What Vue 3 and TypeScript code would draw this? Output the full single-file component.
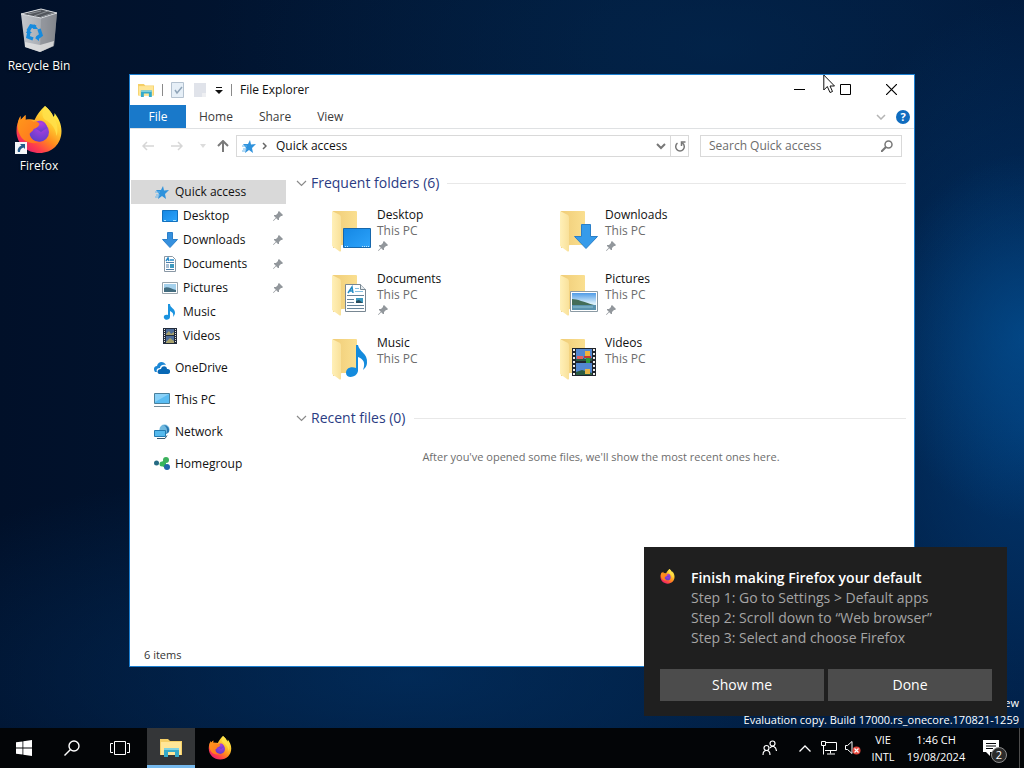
<script setup lang="ts">
import { ref } from 'vue'

interface NavItem {
  label: string
  icon: string
  child?: boolean
  pinned?: boolean
  gap?: boolean
}

interface Folder {
  name: string
  place: string
  icon: string
  pinned: boolean
}

const selected = ref('Quick access')
const query = ref('')

const navItems: NavItem[] = [
  { label: 'Quick access', icon: 'i-star' },
  { label: 'Desktop', icon: 'i-desktop', child: true, pinned: true },
  { label: 'Downloads', icon: 'i-download', child: true, pinned: true },
  { label: 'Documents', icon: 'i-document', child: true, pinned: true },
  { label: 'Pictures', icon: 'i-picture', child: true, pinned: true },
  { label: 'Music', icon: 'i-music', child: true },
  { label: 'Videos', icon: 'i-video', child: true },
  { label: 'OneDrive', icon: 'i-onedrive', gap: true },
  { label: 'This PC', icon: 'i-pc', gap: true },
  { label: 'Network', icon: 'i-network', gap: true },
  { label: 'Homegroup', icon: 'i-homegroup', gap: true },
]

const folders: Folder[] = [
  { name: 'Desktop', place: 'This PC', icon: 'f-desktop', pinned: true },
  { name: 'Downloads', place: 'This PC', icon: 'f-download', pinned: true },
  { name: 'Documents', place: 'This PC', icon: 'f-document', pinned: true },
  { name: 'Pictures', place: 'This PC', icon: 'f-picture', pinned: true },
  { name: 'Music', place: 'This PC', icon: 'f-music', pinned: false },
  { name: 'Videos', place: 'This PC', icon: 'f-video', pinned: false },
]

const tabs = ['Home', 'Share', 'View']
const steps = [
  'Step 1: Go to Settings > Default apps',
  'Step 2: Scroll down to “Web browser”',
  'Step 3: Select and choose Firefox',
]
</script>

<template>
  <div class="screen">
    <svg class="sprite" aria-hidden="true">
      <defs>
        <linearGradient id="g-folder" x1="0" x2="1" y1="0" y2="0">
          <stop offset="0" stop-color="#f0cd78" />
          <stop offset="1" stop-color="#fadf90" />
        </linearGradient>
        <linearGradient id="g-flap" x1="0" x2="1" y1="0" y2="0">
          <stop offset="0" stop-color="#fff0b8" />
          <stop offset="1" stop-color="#f9e19a" />
        </linearGradient>
        <linearGradient id="g-blue" x1="0" x2="1" y1="0" y2="1">
          <stop offset="0" stop-color="#1487e4" />
          <stop offset="1" stop-color="#2ea4fb" />
        </linearGradient>
        <linearGradient id="g-sky" x1="0" x2="0" y1="0" y2="1">
          <stop offset="0" stop-color="#4f9be6" />
          <stop offset="0.6" stop-color="#d9effb" />
        </linearGradient>
        <linearGradient id="g-fox" x1="0.85" x2="0.2" y1="0.1" y2="0.95">
          <stop offset="0" stop-color="#fff44f" />
          <stop offset="0.3" stop-color="#ffc52e" />
          <stop offset="0.55" stop-color="#ff8a1e" />
          <stop offset="0.8" stop-color="#ff3f4a" />
          <stop offset="1" stop-color="#e5206e" />
        </linearGradient>
        <linearGradient id="g-head" x1="0" x2="1" y1="0" y2="1">
          <stop offset="0" stop-color="#ff9a1a" />
          <stop offset="1" stop-color="#ff7020" />
        </linearGradient>
        <radialGradient id="g-globe" cx="0.6" cy="0.25" r="0.8">
          <stop offset="0" stop-color="#b33ee0" />
          <stop offset="1" stop-color="#5a3fc9" />
        </radialGradient>
        <linearGradient id="g-bin" x1="0" x2="1" y1="0" y2="0">
          <stop offset="0" stop-color="#c3c7cd" />
          <stop offset="0.65" stop-color="#a4a8ae" />
          <stop offset="1" stop-color="#7c8086" />
        </linearGradient>
      </defs>

      <symbol id="firefox" viewBox="0 0 48 48">
        <path fill="url(#g-fox)" d="M30 0c4 3 7 7 8.500 11 1-1 1-3 1-4 4 5 7 11 7 18C46.500 38 37 47 24.500 47S1.500 38 1.500 25c0-6 1.500-10 4-15v4l5-5v5c3-1 6-1 9 0 3-6 6-10 10.500-14z" />
        <circle cx="24" cy="26" r="10" fill="url(#g-globe)" />
        <path fill="url(#g-globe)" d="M17 20c0-3 6-6 10-5 3 1 5 4 5 7l-6 4z" />
        <path fill="url(#g-head)" d="M5.500 10v4l5-5v5c3-1 6 0 8 2 2-1 5 0 6 2-1 3-3 4-6 5 0 2-3 3-4 5 1 5 5 8 11 8-8 3-18 0-21-8-3-6-2-13 1-18z" />
        <path fill="#ffe14a" d="M30 0c4 3 7 7 8.500 11 4 6 5 13 3 19-1-8-5-13-11-16-4-3-4-8-.5-14z" opacity=".85" />
      </symbol>

      <symbol id="recycle" viewBox="0 0 40 46">
        <path d="M2 6 22 1l16 4-3 33-14 6-15-5z" fill="url(#g-bin)" />
        <path d="M22 10 38 5l-3 33-14 6z" fill="#85898f" opacity=".6" />
        <path d="M2 6 22 1l16 4-16 5z" fill="#52565c" stroke="#d9dce0" />
        <path d="m9 6 13-3M15 8l14-5M22 9l12-4" stroke="#8b9096" fill="none" />
        <path d="m6 34 15 3 14-4-1 5-13 6-15-5z" fill="#e4e4e4" opacity=".8" />
        <path d="m9 23 3-5 5 1M20 21l2 6-4 3M14 31l-5-2 1-5" fill="none" stroke="#168bde" stroke-width="3.500" />
        <path d="m15 16 4 5h-5zM20 27v6l-4-3zM7 25h6l-4-4z" fill="#168bde" />
      </symbol>

      <symbol id="explorer" viewBox="0 0 22 20">
        <path d="M0 1h8l2 2h12v14H0z" fill="#f5cf66" />
        <path d="M1 4h20v13H1z" fill="#ffe697" />
        <path d="M4 10h15v9h-4v-5H8v5H4z" fill="#35aaca" />
        <path d="M4 10h15v2H4z" fill="#80d2df" />
      </symbol>

      <symbol id="pin" viewBox="0 0 10 10">
        <path d="m6 0 4 4-1 1-1 0-2 2 0 2-1 0-1.800-1.800L.5 10 0 9.500l2.800-2.700L1 5V4h2l2-2V1z" fill="#92979c" />
      </symbol>

      <symbol id="i-star" viewBox="0 0 16 16">
        <path d="M9 2l1 4.500 5-.5-4 4 1 5-4-3-4 3 1-5-3-4h5z" fill="#2f92dc" />
        <path d="M1 8h5M2 11h4M1 13h3" stroke="#69b7ee" />
      </symbol>
      <symbol id="i-desktop" viewBox="0 0 16 16">
        <path d="M.5 2.500h15v11H.5z" fill="url(#g-blue)" stroke="#1271be" />
        <path d="M2 12.500h2M11 12.500h3" stroke="#a6e2ff" />
      </symbol>
      <symbol id="i-download" viewBox="0 0 16 16">
        <path d="M5.500.5h5v7h5L8 15.500.5 7.500h5z" fill="#3590de" stroke="#2b7fca" />
      </symbol>
      <symbol id="i-document" viewBox="0 0 16 16">
        <path d="M2.500.5h8l3 3v12h-11z" fill="#fff" stroke="#8a98a5" />
        <path d="M4 6.500h8M4 9h3M4 11h3M4 13.500h8" stroke="#4e7fa9" />
        <path d="M8 8h4v4H8z" fill="#3d9ac0" />
        <path d="M4 5l2-3 1 3M8 4h4" fill="none" stroke="#2489c9" stroke-width="1.500" />
      </symbol>
      <symbol id="i-picture" viewBox="0 0 16 16">
        <path d="M.5 2.500h15v11H.5z" fill="#fff" stroke="#99a5ad" />
        <path d="M2 4h12v8H2z" fill="#a5d1ec" />
        <path d="M2 8c4-2 7 1 12 2v2H2z" fill="#426c7f" />
      </symbol>
      <symbol id="i-music" viewBox="0 0 16 16">
        <path d="M6 0h2c0 4 5 4 5 9 0 1-1 3-2 4 1-4-1-5-3-6v6c0 3-5 4-6 1s2-4 4-3z" fill="#1b93df" />
      </symbol>
      <symbol id="i-video" viewBox="0 0 16 16">
        <path d="M1 0h14v16H1z" fill="#222b3b" />
        <path d="M2.500 1v14M13.500 1v14" stroke="#e5e5e5" stroke-dasharray="1 1" />
        <path d="M4 1h8v6H4zM4 8h8v7H4z" fill="#4e6d9a" />
        <path d="m4 6 3-3 2 3 3-2v3H4zM4 14l4-4 4 3v2H4z" fill="#a7a16c" />
      </symbol>
      <symbol id="i-onedrive" viewBox="0 0 16 16">
        <path d="M1 12C-1 9 0 6 3 6c1-5 7-5 9-1-4-1-6 1-6 3-3 0-4 2-3 4z" fill="#1c87d5" />
        <path d="M5 14c-3-2-1-5 2-5 1-4 6-3 6 0 4-1 4 5 1 5z" fill="#0868b5" />
      </symbol>
      <symbol id="i-pc" viewBox="0 0 16 16">
        <path d="M.5 1.500h15v10H.5z" fill="#5abcf2" stroke="#4a809c" />
        <path d="M1 2h14L1 10z" fill="#a8e0fb" opacity=".6" />
        <path d="M0 14.500h16" stroke="#788d99" />
      </symbol>
      <symbol id="i-network" viewBox="0 0 16 16">
        <circle cx="10.500" cy="5.500" r="5" fill="#70b9df" />
        <path d="M9 1c4 1 5 6 3 9l3-2c1-4-2-7-6-7z" fill="#2975ad" />
        <path d="M.5 6.500h11v6H.5z" fill="#55b9ed" stroke="#247bb0" />
        <path d="M3 14.500h8l2-3" fill="none" stroke="#38566d" />
      </symbol>
      <symbol id="i-homegroup" viewBox="0 0 16 16">
        <path d="M6 8l6-6v11z" fill="#37b65c" />
        <circle cx="2.500" cy="7" r="2.500" fill="#256a83" />
        <circle cx="8" cy="8" r="2.500" fill="#37b65c" />
        <circle cx="12" cy="4" r="3" fill="#3cb15d" />
        <circle cx="13" cy="11" r="3" fill="#2267a9" />
      </symbol>

      <symbol id="folder" viewBox="0 0 40 42">
        <path d="M1 1h23q1 0 1 1v33H10L1 38z" fill="url(#g-folder)" />
        <path d="M0 1l8 4q1 1 1 3v33q-1 1-2 0L0 36z" fill="url(#g-flap)" />
      </symbol>
      <symbol id="f-desktop" viewBox="0 0 40 42">
        <path d="M11.500 18.500h27v19h-27z" fill="url(#g-blue)" stroke="#1767ab" />
        <path d="M13 36.500h3M30 36.500h7" stroke="#bfe8ff" stroke-dasharray="1 1" />
      </symbol>
      <symbol id="f-download" viewBox="0 0 40 42">
        <path d="M21.500 14.500h9v12h7L26 38.500 14.500 26.500h7z" fill="#369bea" stroke="#2a7fc8" />
      </symbol>
      <symbol id="f-document" viewBox="0 0 40 42">
        <path d="M13.500 10.500h15l5 5v22h-20z" fill="#fff" stroke="#788792" />
        <path d="M28.500 10.500v5h5" fill="#e4eaee" stroke="#788792" />
        <path d="m16 19 4-6 1 6m-3-2h3" fill="none" stroke="#238bc4" stroke-width="1.500" />
        <path d="M23 14.500h4M23 17.500h8" stroke="#84bfdf" />
        <path d="M15 21.500h17M15 25.500h7M15 28.500h7M15 31.500h17M15 34.500h17" stroke="#65839a" />
        <path d="M24 24h7v5h-7z" fill="#3d9ac0" />
        <path d="M24 27l3-1 4 3h-7z" fill="#294c5d" />
      </symbol>
      <symbol id="f-picture" viewBox="0 0 40 42">
        <path d="M10.500 17.500h27v20h-27z" fill="#fff" stroke="#8b9aa4" />
        <path d="M12 19h24v17H12z" fill="url(#g-sky)" />
        <path d="M12 25c5 0 12 3 22 6H12z" fill="#436d58" />
        <path d="M12 31h24v5H12z" fill="#5a93ae" />
        <path d="M13 33h20" stroke="#8cc1d2" />
      </symbol>
      <symbol id="f-music" viewBox="0 0 40 42">
        <path d="M24 7h2c1 7 10 8 9 18 0 3-2 5-4 7 3-8 0-11-5-13v14c-1 7-12 8-12 2 0-5 5-7 10-5z" fill="#148bdd" />
      </symbol>
      <symbol id="f-video" viewBox="0 0 40 42">
        <path d="M12 10h24v28H12z" fill="#20242b" />
        <path d="M14 11v26M34 11v26" stroke="#eee" stroke-width="2" stroke-dasharray="2 2" />
        <path d="M16 11h16v12H16zM16 25h16v12H16z" fill="#5387d0" />
        <path d="m16 21 5-2 4 2 7-1v3H16zM16 34l6-2 10 3v2H16z" fill="#2b5c42" />
        <path d="M17 18h6v3h-6z" fill="#e15d60" />
        <path d="M25 13h5v5h-5z" fill="#f0b43c" />
        <path d="M24 18h7v2h-7z" fill="#c63832" />
        <path d="M26 20h4v5h-4z" fill="#2f9a3c" />
        <path d="M25 31h5v5h-5z" fill="#e6b546" />
      </symbol>
    </svg>

    <section class="shortcuts" aria-label="Desktop shortcuts">
      <button type="button" class="shortcut">
        <svg class="bin-art"><use href="#recycle" /></svg>
        <span>Recycle Bin</span>
      </button>
      <button type="button" class="shortcut">
        <span class="fox-wrap">
          <svg class="fox-art"><use href="#firefox" /></svg>
          <svg class="arrow-badge" viewBox="0 0 12 12">
            <path d="M0 0h12v12H0z" fill="#f4f6f8" />
            <path d="M5 2h5v5L8.500 5.500C6 6 5 8 5 10H3C2 7 4 4.500 6.500 3.500z" fill="#245b8c" />
          </svg>
        </span>
        <span>Firefox</span>
      </button>
    </section>

    <main class="window" aria-label="File Explorer">
      <header class="titlebar">
        <svg class="app-icon"><use href="#explorer" /></svg>
        <i class="divider"></i>
        <button type="button" class="quick" aria-label="Properties">
          <svg width="14" height="16" viewBox="0 0 14 16">
            <path d="M.5.500h12v15H.5z" fill="#e6eff7" stroke="#b4c2d0" />
            <path d="m4 8 2 3 5-6" fill="none" stroke="#8fa4b8" stroke-width="1.500" />
          </svg>
        </button>
        <button type="button" class="quick" aria-label="New folder">
          <svg width="14" height="16" viewBox="0 0 14 16">
            <path d="M1 1h12v14H1z" fill="#e0e3ea" />
            <path d="M9 15v-4h4v4z" fill="#eeeff2" />
          </svg>
        </button>
        <button type="button" class="quick caret" aria-label="Customize Quick Access Toolbar">
          <svg width="8" height="8" viewBox="0 0 8 8">
            <path d="M1 1.500h6" stroke="#111" /><path d="M0 4h8L4 8z" fill="#111" />
          </svg>
        </button>
        <i class="divider"></i>
        <h1>File Explorer</h1>
        <div class="controls">
          <button type="button" aria-label="Minimize">
            <svg width="11" height="11" viewBox="0 0 11 11"><path d="M0 5.500h11" stroke="#000" /></svg>
          </button>
          <button type="button" aria-label="Maximize">
            <svg width="11" height="11" viewBox="0 0 11 11"><path d="M.5.500h10v10H.5z" fill="none" stroke="#000" /></svg>
          </button>
          <button type="button" aria-label="Close">
            <svg width="11" height="11" viewBox="0 0 11 11"><path d="m0 0 11 11M11 0 0 11" stroke="#000" stroke-width="1.200" /></svg>
          </button>
        </div>
      </header>

      <nav class="ribbon" aria-label="Ribbon">
        <button type="button" class="file-tab">File</button>
        <button v-for="tab in tabs" :key="tab" type="button" class="tab">{{ tab }}</button>
        <span class="spacer"></span>
        <button type="button" class="expand" aria-label="Expand the Ribbon">
          <svg width="10" height="6" viewBox="0 0 10 6"><path d="m1 1 4 4 4-4" fill="none" stroke="#b4b4b4" stroke-width="1.500" /></svg>
        </button>
        <button type="button" class="help" aria-label="Help">?</button>
      </nav>

      <div class="address-row">
        <button type="button" class="arrow" aria-label="Back">
          <svg width="12" height="10" viewBox="0 0 12 10"><path d="M12 5H1M5 1 1 5l4 4" fill="none" stroke="#d6d6d6" stroke-width="1.500" /></svg>
        </button>
        <button type="button" class="arrow" aria-label="Forward">
          <svg width="12" height="10" viewBox="0 0 12 10"><path d="M0 5h11M7 1l4 4-4 4" fill="none" stroke="#d6d6d6" stroke-width="1.500" /></svg>
        </button>
        <button type="button" class="recent" aria-label="Recent locations">
          <svg width="6" height="4" viewBox="0 0 6 4"><path d="M0 0h6L3 4z" fill="#dcdcdc" /></svg>
        </button>
        <button type="button" class="up" aria-label="Up">
          <svg width="12" height="12" viewBox="0 0 12 12"><path d="M6 12V1M1 6l5-5 5 5" fill="none" stroke="#7a7a7a" stroke-width="2" /></svg>
        </button>
        <div class="address">
          <svg class="small-icon"><use href="#i-star" /></svg>
          <svg class="crumb" width="5" height="8" viewBox="0 0 5 8"><path d="m1 1 3 3-3 3" fill="none" stroke="#666" stroke-width="1.500" /></svg>
          <a href="#" class="path">Quick access</a>
          <button type="button" class="drop" aria-label="Previous locations">
            <svg width="10" height="7" viewBox="0 0 10 7"><path d="m1 1 4 4 4-4" fill="none" stroke="#777" stroke-width="2" /></svg>
          </button>
          <button type="button" class="refresh" aria-label="Refresh">
            <svg width="12" height="12" viewBox="0 0 12 12">
              <path d="M3.500 3.200a4.300 4.300 0 1 0 5 0M7.500 6V2H11.500" fill="none" stroke="#777" stroke-width="1.500" />
            </svg>
          </button>
        </div>
        <label class="search">
          <input v-model="query" type="text" placeholder="Search Quick access" aria-label="Search Quick access" />
          <svg width="12" height="12" viewBox="0 0 12 12"><circle cx="7.500" cy="4.500" r="3.500" fill="none" stroke="#777" stroke-width="1.500" /><path d="m5 7-5 5" stroke="#777" stroke-width="2" /></svg>
        </label>
      </div>

      <div class="body">
        <nav class="tree" aria-label="Navigation pane">
          <button
            v-for="item in navItems"
            :key="item.label"
            type="button"
            class="node"
            :class="{ child: item.child, gap: item.gap, selected: selected === item.label }"
            @click="selected = item.label"
          >
            <svg class="small-icon"><use :href="'#' + item.icon" /></svg>
            <span>{{ item.label }}</span>
            <svg v-if="item.pinned" class="pin"><use href="#pin" /></svg>
          </button>
        </nav>

        <section class="content">
          <h2 class="group">
            <svg width="11" height="7" viewBox="0 0 11 7"><path d="m1 1 4.500 4.500L10 1" fill="none" stroke="#8a8a8a" stroke-width="1.200" /></svg>
            <span>Frequent folders (6)</span><i></i>
          </h2>
          <ul class="tiles">
            <li v-for="folder in folders" :key="folder.name">
              <button type="button" class="tile">
                <svg class="folder-art" viewBox="0 0 40 42">
                  <use href="#folder" /><use :href="'#' + folder.icon" />
                </svg>
                <span class="tile-text">
                  <span>{{ folder.name }}</span>
                  <span class="place">{{ folder.place }}</span>
                  <svg v-if="folder.pinned" class="pin"><use href="#pin" /></svg>
                </span>
              </button>
            </li>
          </ul>
          <h2 class="group">
            <svg width="11" height="7" viewBox="0 0 11 7"><path d="m1 1 4.500 4.500L10 1" fill="none" stroke="#8a8a8a" stroke-width="1.200" /></svg>
            <span>Recent files (0)</span><i></i>
          </h2>
          <p class="empty">After you've opened some files, we'll show the most recent ones here.</p>
        </section>
      </div>

      <footer class="status">6 items</footer>
    </main>

    <div class="watermark"><span>ew</span><span>Evaluation copy. Build 17000.rs_onecore.170821-1259</span></div>

    <aside class="toast" role="alert">
      <div class="toast-main">
        <svg class="toast-icon"><use href="#firefox" /></svg>
        <div>
          <h2>Finish making Firefox your default</h2>
          <p v-for="step in steps" :key="step">{{ step }}</p>
        </div>
      </div>
      <div class="toast-actions">
        <button type="button">Show me</button>
        <button type="button">Done</button>
      </div>
    </aside>

    <svg class="pointer" viewBox="0 0 12 20" aria-hidden="true">
      <path d="M.8 1v15l3.500-3.500L7 18.500l2.500-1L7 12h4.500z" fill="#fff" stroke="#111" />
    </svg>

    <footer class="taskbar">
      <button type="button" class="task" aria-label="Start">
        <svg width="16" height="16" viewBox="0 0 16 16"><path d="M0 2.300 6.500 1.400v6.200H0zM7.300 1.300 16 0v7.600H7.300zM0 8.400h6.500v6.200L0 13.700zM7.300 8.400H16V16l-8.700-1.300z" fill="#fff" /></svg>
      </button>
      <button type="button" class="task" aria-label="Search">
        <svg width="16" height="16" viewBox="0 0 16 16"><circle cx="10" cy="6" r="5" fill="none" stroke="#fff" stroke-width="1.400" /><path d="M6.500 9.500.5 15.500" stroke="#fff" stroke-width="1.400" /></svg>
      </button>
      <button type="button" class="task" aria-label="Task View">
        <svg width="20" height="14" viewBox="0 0 20 14"><path d="M4.500.5h11v13h-11zM3 2.500H.5v9H3M17 2.500h2.500v9H17" fill="none" stroke="#fff" /></svg>
      </button>
      <button type="button" class="task active" aria-label="File Explorer">
        <svg width="22" height="20"><use href="#explorer" /></svg>
      </button>
      <button type="button" class="task" aria-label="Firefox">
        <svg width="24" height="24"><use href="#firefox" /></svg>
      </button>
      <span class="spacer"></span>
      <button type="button" class="people" aria-label="People">
        <svg width="15" height="16" viewBox="0 0 15 16" fill="none" stroke="#fff" stroke-width="1.200">
          <circle cx="10.500" cy="3.500" r="2.500" /><path d="M8 8c2-3 6-2 6.500 3" />
          <circle cx="4.500" cy="8" r="2.500" /><path d="M1 15c0-6 7-6 7 0" />
        </svg>
      </button>
      <button type="button" class="tray" aria-label="Show hidden icons">
        <svg width="12" height="7" viewBox="0 0 12 7"><path d="m.5 6.500 5.500-5.500 5.500 5.500" fill="none" stroke="#fff" stroke-width="1.300" /></svg>
      </button>
      <button type="button" class="tray" aria-label="Network">
        <svg width="16" height="14" viewBox="0 0 16 14" fill="none" stroke="#fff"><path d="M4.500 1.500h11v8H4M9.500 9.500v3M6 13h8M.5.500h4v4h-4zM2.500 4.500v9" /></svg>
      </button>
      <button type="button" class="tray" aria-label="Volume">
        <svg width="16" height="14" viewBox="0 0 16 14">
          <path d="M.5 4.500h2L7 .5v12L2.500 8.500h-2z" fill="none" stroke="#fff" />
          <circle cx="11.500" cy="9.500" r="4" fill="#e5473c" /><path d="m9.500 7.500 4 4m0-4-4 4" stroke="#fff" stroke-width="1.200" />
        </svg>
      </button>
      <button type="button" class="lang"><span>VIE</span><span>INTL</span></button>
      <button type="button" class="clock"><span>1:46 CH</span><span>19/08/2024</span></button>
      <button type="button" class="notify" aria-label="2 new notifications">
        <svg width="16" height="16" viewBox="0 0 16 16"><path d="M0 0h16v12h-9l0 4-4-4H0z" fill="#fff" /><path d="M3 3.500h10M3 6h10M3 8.500h7" stroke="#05070a" /></svg>
        <b>2</b>
      </button>
      <button type="button" class="peek" aria-label="Show desktop"></button>
    </footer>
  </div>
</template>

<style>
html,
body {
  background: #011531;
}
</style>

<style scoped>
* {
  box-sizing: border-box;
}
.screen {
  position: relative;
  height: 100vh;
  overflow: hidden;
  font-family: "Open Sans", "Noto Sans", sans-serif;
  font-size: 12px;
  line-height: 16px;
  color: #111;
  background:
    radial-gradient(ellipse 14% 24% at 100% 44%, rgba(4, 88, 160, 0.55), transparent),
    radial-gradient(ellipse 24% 55% at 100% 55%, rgba(2, 66, 130, 0.7), transparent),
    radial-gradient(ellipse 50% 30% at 70% 6%, rgba(3, 42, 84, 0.55), transparent),
    radial-gradient(ellipse 60% 28% at 40% 88%, rgba(2, 48, 98, 0.75), transparent),
    linear-gradient(90deg, #011029, #011a3a 60%, #01183a);
}
.sprite {
  position: absolute;
  width: 0;
  height: 0;
}
button {
  margin: 0;
  padding: 0;
  border: 0;
  background: none;
  font: inherit;
  color: inherit;
}
h1,
h2,
p,
ul {
  margin: 0;
  padding: 0;
  font: inherit;
  list-style: none;
}
svg {
  flex: none;
  display: block;
}
.spacer {
  flex: 1;
}

.shortcuts {
  display: flex;
  flex-direction: column;
  gap: 32px;
  width: 78px;
  padding-top: 8px;
}
.shortcut {
  display: flex;
  flex-direction: column;
  align-items: center;
  gap: 4px;
  color: #fff;
  text-shadow: 0 1px 2px #000;
}
.bin-art {
  width: 40px;
  height: 46px;
}
.fox-wrap {
  position: relative;
}
.fox-art {
  width: 48px;
  height: 48px;
}
.arrow-badge {
  position: absolute;
  left: 0;
  bottom: 0;
  width: 12px;
  height: 12px;
}

.window {
  position: absolute;
  top: 74px;
  left: 129px;
  right: 109px;
  bottom: 101px;
  display: flex;
  flex-direction: column;
  background: #fff;
  border: 1px solid #1c7fd0;
}
.titlebar {
  display: flex;
  align-items: center;
  height: 30px;
  padding-left: 8px;
  gap: 8px;
}
.titlebar h1 {
  font-size: 12px;
}
.app-icon {
  width: 16px;
  height: 15px;
}
.divider {
  width: 1px;
  height: 12px;
  background: #8a8a8a;
}
.quick {
  width: 14px;
  display: flex;
  justify-content: center;
}
.quick.caret {
  width: 8px;
}
.controls {
  display: flex;
  align-self: stretch;
  margin-left: auto;
}
.controls button {
  width: 46px;
  height: 28px;
  display: flex;
  align-items: center;
  justify-content: center;
}
.ribbon {
  display: flex;
  align-items: center;
  height: 24px;
  padding-right: 4px;
  border-bottom: 1px solid #dfe1e3;
  color: #3b3b3b;
}
.file-tab {
  align-self: stretch;
  width: 56px;
  color: #fff;
  background: #1979ca;
}
.tab {
  padding: 0 13px;
}
.expand {
  padding: 0 10px;
}
.help {
  width: 14px;
  height: 14px;
  border-radius: 50%;
  background: #0f6cbf;
  color: #fff;
  font-size: 11px;
  font-weight: 700;
  line-height: 14px;
}
.address-row {
  display: flex;
  align-items: center;
  padding: 6px 12px 0 12px;
}
.arrow {
  width: 29px;
}
.recent {
  width: 14px;
}
.up {
  width: 22px;
  padding-left: 3px;
}
.address {
  display: flex;
  align-items: center;
  flex: 1;
  height: 22px;
  margin-right: 11px;
  padding-left: 4px;
  border: 1px solid #d9d9d9;
}
.small-icon {
  width: 16px;
  height: 16px;
}
.crumb {
  margin: 0 9px 0 5px;
}
.path {
  flex: 1;
  color: #111;
  text-decoration: none;
}
.drop,
.refresh {
  display: flex;
  align-items: center;
  justify-content: center;
  align-self: stretch;
  width: 18px;
}
.refresh {
  border-left: 1px solid #d9d9d9;
}
.search {
  display: flex;
  align-items: center;
  width: 202px;
  height: 22px;
  padding: 0 8px;
  border: 1px solid #d9d9d9;
}
.search input {
  flex: 1;
  min-width: 0;
  padding: 0;
  border: 0;
  outline: 0;
  background: none;
  font: inherit;
}
.search input::placeholder {
  color: #6d6d6d;
  opacity: 1;
}

.body {
  display: flex;
  flex: 1;
  min-height: 0;
}
.tree {
  display: flex;
  flex-direction: column;
  width: 160px;
  padding: 23px 4px 0 1px;
}
.node {
  display: flex;
  align-items: center;
  gap: 5px;
  height: 24px;
  padding: 0 3px 0 23px;
  text-align: left;
}
.node.child {
  padding-left: 31px;
}
.node.gap {
  margin-top: 8px;
}
.node.selected {
  background: #d9d9d9;
}
.pin {
  width: 10px;
  height: 10px;
}
.node .pin {
  margin-left: auto;
}
.content {
  flex: 1;
  padding: 16px 8px 0 6px;
}
.group {
  display: flex;
  align-items: center;
  gap: 4px;
  height: 20px;
  color: #2b3c83;
  font-size: 14px;
  line-height: 20px;
}
.group i {
  flex: 1;
  height: 1px;
  margin-left: 4px;
  background: #e8e8e8;
}
.tiles {
  display: grid;
  grid-template-columns: repeat(auto-fill, 228px);
  grid-auto-rows: 64px;
  padding: 14px 0 9px 36px;
  max-width: 600px;
}
.tile {
  display: flex;
  gap: 5px;
  text-align: left;
}
.folder-art {
  width: 40px;
  height: 42px;
  margin-top: 3px;
}
.tile-text {
  display: flex;
  flex-direction: column;
}
.place {
  color: #6d6d6d;
}
.tile-text .pin {
  margin: 2px 0 0 1px;
}
.empty {
  padding-top: 21px;
  text-align: center;
  color: #6d6d6d;
  font-size: 11px;
}
.status {
  height: 23px;
  padding: 4px 14px 0;
  color: #333;
  font-size: 11px;
}

.watermark {
  position: absolute;
  right: 5px;
  bottom: 40px;
  display: flex;
  flex-direction: column;
  align-items: flex-end;
  font-size: 11px;
  line-height: 17px;
  color: #fff;
}
.toast {
  position: absolute;
  right: 17px;
  bottom: 52px;
  width: 363px;
  padding: 21px 15px 15px 16px;
  background: #1f1f1f;
  color: #a5a5a5;
  font-size: 14px;
  line-height: 20px;
}
.toast-main {
  display: flex;
  gap: 16px;
}
.toast-icon {
  width: 15px;
  height: 15px;
  margin-top: 1px;
}
.toast h2 {
  color: #fff;
  font-weight: 600;
}
.toast-actions {
  display: grid;
  grid-template-columns: 1fr 1fr;
  gap: 4px;
  margin-top: 21px;
}
.toast-actions button {
  height: 32px;
  background: #4c4c4c;
  color: #fff;
}
.pointer {
  position: absolute;
  left: 823px;
  top: 74px;
  width: 12px;
  height: 20px;
}

.taskbar {
  position: absolute;
  left: 0;
  right: 0;
  bottom: 0;
  display: flex;
  align-items: stretch;
  height: 40px;
  background: #030507;
  color: #fff;
  font-size: 11px;
  line-height: 17px;
}
.taskbar button {
  display: flex;
  align-items: center;
  justify-content: center;
}
.taskbar .task {
  width: 48px;
}
.taskbar .active {
  margin: 0 1px 0 3px;
  background: #343638;
  border-bottom: 3px solid #76b9ed;
  padding-top: 3px;
}
.taskbar .people {
  width: 48px;
}
.taskbar .tray {
  width: 24px;
}
.taskbar .lang,
.taskbar .clock {
  flex-direction: column;
}
.taskbar .lang {
  width: 36px;
}
.taskbar .clock {
  width: 70px;
}
.taskbar .notify {
  position: relative;
  width: 48px;
  padding-right: 8px;
}
.notify b {
  position: absolute;
  left: 20px;
  bottom: 5px;
  width: 16px;
  height: 16px;
  border: 1px solid #8c8c8c;
  border-radius: 50%;
  background: #2b2b2b;
  font-weight: 400;
  line-height: 14px;
  text-align: center;
}
.taskbar .peek {
  width: 5px;
  border-left: 1px solid #4d4d4d;
}
</style>
